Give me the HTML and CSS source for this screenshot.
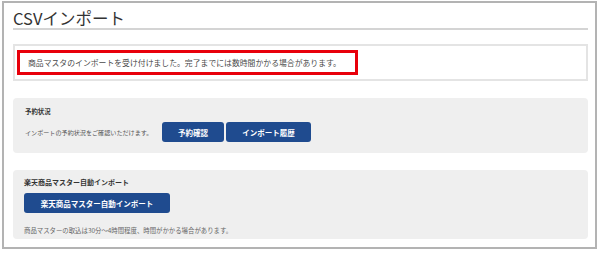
FILE: index.html
```html
<!DOCTYPE html>
<html lang="ja">
<head>
  <meta charset="UTF-8">
  <meta name="viewport" content="width=device-width, initial-scale=1.0">
  <title>CSVインポート</title>
  <link rel="stylesheet" href="styles.css">
</head>
<body>
  <div class="frame">
    <h1 class="title">CSVインポート</h1>

    <div class="notice">
      <p class="notice-text">商品マスタのインポートを受け付けました。完了までには数時間かかる場合があります。</p>
    </div>

    <div class="section section-reserve">
      <h2 class="section-label">予約状況</h2>
      <div class="row">
        <span class="desc">インポートの予約状況をご確認いただけます。</span>
        <button class="btn btn-check">予約確認</button>
        <button class="btn btn-history">インポート履歴</button>
      </div>
    </div>

    <div class="section section-auto">
      <h2 class="section-label label-large">楽天商品マスター自動インポート</h2>
      <button class="btn btn-auto">楽天商品マスター自動インポート</button>
      <p class="note">商品マスターの取込は30分〜4時間程度、時間がかかる場合があります。</p>
    </div>
  </div>
</body>
</html>
```

FILE: styles.css
```css
body {
  margin: 0;
  font-family: "Noto Sans CJK JP", "Noto Sans", sans-serif;
  color: #333;
  background: #fff;
}
.frame {
  margin: 1px 3px 0 2px;
  border: 2px solid #b3b3b3;
  padding: 0 7px 8px 9px;
}
.title {
  margin: 5px 0 0;
  font-size: 16.5px;
  line-height: 20px;
  font-weight: 400;
  color: #333;
  border-bottom: 2px solid #d4d4d4;
}
.notice {
  margin-top: 14px;
  border: 2px solid #e4e4e4;
  padding: 4px 2px;
}
.notice-text {
  margin: 0;
  width: 327px;
  height: 19px;
  border: 3px solid #e8000b;
  padding: 0 0 0 8px;
  font-size: 7.85px;
  line-height: 19px;
  color: #4a4a4a;
  white-space: nowrap;
}
.section {
  margin-top: 17px;
  background: #efefef;
  border-radius: 4px;
}
.section-reserve {
  padding: 8px 12px 11px;
}
.section-auto {
  padding: 6px 11px 2px;
}
.section-label {
  margin: 0;
  font-size: 6.4px;
  line-height: 12px;
  font-weight: 700;
  color: #333;
}
.label-large {
  font-size: 7px;
}
.row {
  margin-top: 4px;
  display: flex;
  align-items: center;
}
.desc {
  width: 128px;
  margin-right: 9px;
  font-size: 6.1px;
  color: #555;
  white-space: nowrap;
}
.btn {
  height: 20px;
  border: none;
  border-radius: 3px;
  background: #1f4b8f;
  color: #fff;
  font-family: inherit;
  font-size: 7.5px;
  font-weight: 700;
  padding: 0;
  cursor: pointer;
}
.btn-check {
  width: 62px;
}
.btn-history {
  width: 85px;
  margin-left: 2px;
}
.btn-auto {
  display: block;
  width: 146px;
  margin-top: 5px;
}
.note {
  margin: 12px 0 0;
  font-size: 6.4px;
  line-height: 12px;
  color: #666;
  white-space: nowrap;
}
```
